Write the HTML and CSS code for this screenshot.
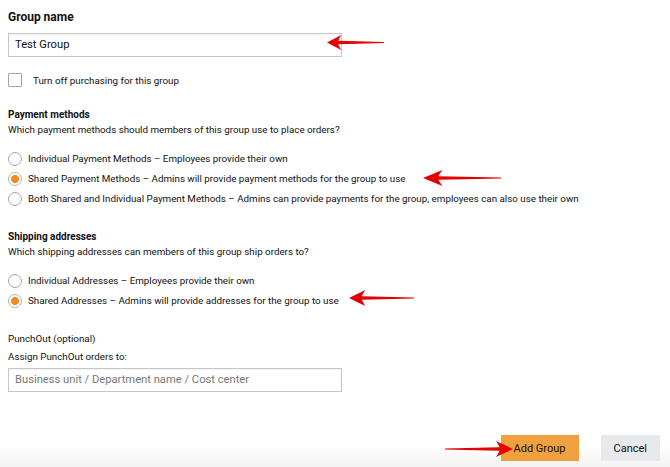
FILE: index.html
```html
<!DOCTYPE html>
<html lang="en">
  <head>
    <meta charset="UTF-8" />
    <meta name="viewport" content="width=device-width, initial-scale=1.0" />
    <title>Group settings</title>
    <link rel="stylesheet" href="styles.css">
  </head>
  <body>
    <div class="page">
      <!-- Group name -->
      <h2 class="title">Group name</h2>
      <div class="text-input">Test Group</div>

      <label class="check-row">
        <span class="checkbox"></span>
        Turn off purchasing for this group
      </label>

      <!-- Payment methods -->
      <div class="section">
        <h3>Payment methods</h3>
        <p class="hint">Which payment methods should members of this group use to place orders?</p>
        <div class="radio-list">
          <div class="radio-row"><span class="radio"></span>Individual Payment Methods – Employees provide their own</div>
          <div class="radio-row"><span class="radio checked"></span>Shared Payment Methods – Admins will provide payment methods for the group to use</div>
          <div class="radio-row"><span class="radio"></span>Both Shared and Individual Payment Methods – Admins can provide payments for the group, employees can also use their own</div>
        </div>
      </div>

      <!-- Shipping addresses -->
      <div class="section">
        <h3>Shipping addresses</h3>
        <p class="hint">Which shipping addresses can members of this group ship orders to?</p>
        <div class="radio-list">
          <div class="radio-row"><span class="radio"></span>Individual Addresses – Employees provide their own</div>
          <div class="radio-row"><span class="radio checked"></span>Shared Addresses – Admins will provide addresses for the group to use</div>
        </div>
      </div>

      <!-- PunchOut -->
      <div class="punchout">
        <p class="plain">PunchOut (optional)</p>
        <p class="plain">Assign PunchOut orders to:</p>
        <div class="text-input placeholder">Business unit / Department name / Cost center</div>
      </div>

      <!-- Footer buttons -->
      <footer class="actions">
        <button class="btn primary">Add Group</button>
        <button class="btn">Cancel</button>
      </footer>

      <!-- Annotation arrows -->
      <svg class="arrow a1" viewBox="0 0 76 16" preserveAspectRatio="none"><path d="M0 8 L19 0 Q16 4 15 6.2 L76 7.4 L76 8.6 L15 9.8 Q16 12 19 16 Z" /></svg>
      <svg class="arrow a2" viewBox="0 0 76 16" preserveAspectRatio="none"><path d="M0 8 L19 0 Q16 4 15 6.2 L76 7.4 L76 8.6 L15 9.8 Q16 12 19 16 Z" /></svg>
      <svg class="arrow a3" viewBox="0 0 76 16" preserveAspectRatio="none"><path d="M0 8 L19 0 Q16 4 15 6.2 L76 7.4 L76 8.6 L15 9.8 Q16 12 19 16 Z" /></svg>
      <svg class="arrow a4" viewBox="0 0 76 16" preserveAspectRatio="none"><path d="M0 8 L19 0 Q16 4 15 6.2 L76 7.4 L76 8.6 L15 9.8 Q16 12 19 16 Z" /></svg>
    </div>
  </body>
</html>
```

FILE: styles.css
```css
/* General */
body {
  margin: 0;
  font-family: Roboto, "Liberation Sans", sans-serif;
  color: #111;
  background: white;
}

.page {
  position: relative;
  height: 467px;
  padding: 9px 8px 0;
  box-sizing: border-box;
  font-size: 9.8px;
}

.title {
  margin: 0 0 8px;
  font-size: 12px;
  font-weight: bold;
  line-height: 16px;
}

/* Inputs */
.text-input {
  width: 334px;
  height: 24px;
  box-sizing: border-box;
  border: 1px solid #c6c6c6;
  box-shadow: inset 0 1px 1px rgba(0, 0, 0, 0.05);
  padding: 0 6px;
  font-size: 11.2px;
  line-height: 22px;
  color: #111;
}

.text-input.placeholder {
  color: #777;
}

.check-row {
  display: flex;
  align-items: center;
  gap: 11px;
  margin-top: 16px;
}

.checkbox {
  width: 12px;
  height: 12px;
  border: 1px solid #a6a6a6;
  border-radius: 1px;
}

/* Sections */
.section {
  margin-top: 20px;
}

.section + .section {
  margin-top: 23px;
}

.section h3 {
  margin: 0;
  font-size: 10px;
  font-weight: bold;
  line-height: 15px;
}

.hint {
  margin: 0;
  line-height: 15px;
}

.radio-list {
  margin-top: 14px;
  display: flex;
  flex-direction: column;
  gap: 5px;
}

.radio-row {
  display: flex;
  align-items: center;
  gap: 6px;
  height: 15px;
}

.radio {
  width: 14px;
  height: 14px;
  border: 1px solid #a6a6a6;
  border-radius: 50%;
  box-sizing: border-box;
  flex: none;
}

.radio.checked {
  border-color: #b5b5b5;
  background: radial-gradient(circle, #f08b1d 0 3.5px, white 4.5px);
}

/* PunchOut */
.punchout {
  margin-top: 23px;
}

.plain {
  margin: 0 0 3px;
  line-height: 15px;
}

.punchout .text-input {
  margin-top: 4px;
}

/* Footer */
.actions {
  position: absolute;
  left: 0;
  right: 0;
  bottom: 0;
  height: 40px;
  display: flex;
  justify-content: flex-end;
  align-items: flex-start;
  gap: 22px;
  padding: 8px 10px 0;
  box-sizing: border-box;
  background: linear-gradient(to bottom, white 0, white 45%, #f3f3f3 100%);
}

.btn {
  height: 26px;
  padding: 0 13px;
  border: none;
  background: #e7e9ec;
  color: #111;
  font-family: inherit;
  font-size: 11px;
  cursor: pointer;
}

.btn.primary {
  background: #f0a03c;
}

/* Arrows */
.arrow {
  position: absolute;
  fill: #e50000;
  height: 16px;
}

.a1 { left: 327px; top: 35px; width: 57px; height: 15px; }
.a2 { left: 423px; top: 170px; width: 78px; }
.a3 { left: 349px; top: 290px; width: 65px; }
.a4 { left: 445px; top: 441px; width: 68px; transform: scaleX(-1); }
```
